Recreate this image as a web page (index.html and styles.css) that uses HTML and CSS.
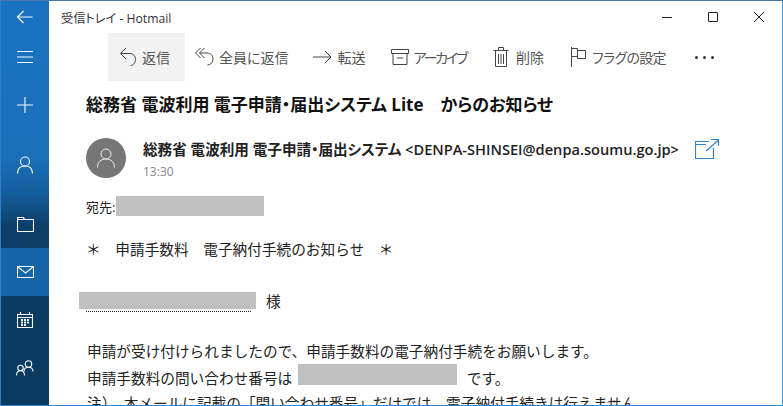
FILE: index.html
```html
<!DOCTYPE html>
<html lang="ja">
<head>
<meta charset="utf-8">
<title>受信トレイ - Hotmail</title>
<link rel="stylesheet" href="styles.css">
</head>
<body>
<div class="window">
  <nav class="rail">
    <div class="rail-item back"><svg width="18" height="14" viewBox="0 0 18 14"><path d="M16.500 7H1.500M7.500 1 1.500 7l6 6"/></svg></div>
    <div class="rail-item"><svg width="16" height="12" viewBox="0 0 16 12"><path d="M0 .5h16M0 6h16M0 11.500h16"/></svg></div>
    <div class="rail-item"><svg width="16" height="16" viewBox="0 0 16 16"><path d="M8 0v16M0 8h16"/></svg></div>
    <div class="rail-gap-a"></div>
    <div class="rail-item"><svg width="16" height="18" viewBox="0 0 16 18"><circle cx="8" cy="5.500" r="4.500"/><path d="M.5 17.500c0-5 3-7.500 7.500-7.500s7.500 2.500 7.500 7.500"/></svg></div>
    <div class="rail-gap-b"></div>
    <div class="rail-item"><svg width="17" height="15" viewBox="0 0 17 15"><path d="M.5.500h6l1 2h9v12H.5zM.5 2.500h7"/></svg></div>
    <div class="rail-item active"><svg width="17" height="12" viewBox="0 0 17 12"><path d="M.5.500h16v11H.5zM.5.500l8 6.500 8-6.500"/></svg></div>
    <div class="rail-item"><svg width="16" height="16" viewBox="0 0 16 16"><path d="M.5 2.500h15v13H.5zM.5 5.500h15M3.500 0v3M12.500 0v3"/><path class="dots" d="M4 8h8M4 10.500h8M4 13h6"/></svg></div>
    <div class="rail-item"><svg width="18" height="16" viewBox="0 0 18 16"><circle cx="12.500" cy="4" r="3.200"/><path d="M8 11.500c0-3 1.800-4.300 4.500-4.300s4.500 1.300 4.500 4.300"/><circle cx="4.500" cy="8" r="2.700"/><path d="M.5 15.500c0-3 1.500-4.800 4-4.800s4 1.800 4 4.800"/></svg></div>
  </nav>
  <main class="pane">
    <header class="titlebar">
      <span class="app-title">受信トレイ - Hotmail</span>
      <div class="controls">
        <svg class="ctl" width="46" height="32" viewBox="0 0 46 32"><path d="M18 16.500h10"/></svg>
        <svg class="ctl" width="46" height="32" viewBox="0 0 46 32"><path d="M18.500 11.500h9v9h-9z"/></svg>
        <svg class="ctl" width="46" height="32" viewBox="0 0 46 32"><path d="M18 11l10 10M28 11 18 21"/></svg>
      </div>
    </header>
    <div class="toolbar">
      <button class="tool first"><svg width="18" height="20" viewBox="0 0 18 20"><path d="M7 1 1.500 6.500 7 12M1.500 6.500H11c3 0 5.500 2.500 5.500 6 0 3.500-2.500 6-5 6"/></svg><span>返信</span></button>
      <button class="tool"><svg width="19" height="20" viewBox="0 0 19 20"><path d="M5.500 1 .5 6l5 5M9.500 1 4.500 6l5 5M4.500 6H12c3.500 0 6 2.500 6 6s-2.500 6-5.500 6"/></svg><span>全員に返信</span></button>
      <button class="tool tool-forward"><svg width="19" height="14" viewBox="0 0 19 14"><path d="M0 7h18M12 1l6 6-6 6"/></svg><span>転送</span></button>
      <button class="tool tool-archive"><svg width="18" height="16" viewBox="0 0 18 16"><path d="M.5.500h17v4H.5zM2 4.500v11h14v-11M6 9h6"/></svg><span class="tight">アーカイブ</span></button>
      <button class="tool tool-delete"><svg width="16" height="20" viewBox="0 0 16 20"><path d="M.5 3.500h15M2.500 3.500v16h11v-16M5.500 3.500V.5h5v3M5.500 7v10M8 7v10M10.500 7v10"/></svg><span>削除</span></button>
      <button class="tool"><svg width="16" height="20" viewBox="0 0 16 20"><path d="M.5 0v20M.5 1.500h6v2h8v8h-8v-2h-6M6.500 3.500v6"/></svg><span class="tight-flag">フラグの設定</span></button>
      <div class="more"><i></i><i></i><i></i></div>
    </div>
    <h1 class="subject">総務省 電波利用 電子申請・届出システム Lite　からのお知らせ</h1>
    <section class="sender">
      <div class="avatar"><svg width="18" height="20" viewBox="0 0 18 20"><circle cx="9" cy="6" r="5"/><path d="M.5 19.500c0-5.500 3.500-8.500 8.500-8.500s8.500 3 8.500 8.500"/></svg></div>
      <div class="sender-text">
        <div class="sender-name">総務省 電波利用 電子申請・届出システム &lt;DENPA-SHINSEI@denpa.soumu.go.jp&gt;</div>
        <div class="time">13:30</div>
      </div>
      <svg class="popout" width="24" height="20" viewBox="0 0 24 20"><path d="M14 2.500H.5v17h18V9M.5 5.500H11M11 12 23 1.500M16 .5h7.500V7"/></svg>
    </section>
    <article class="mail">
      <p class="to">宛先:<span class="redact r-to"></span></p>
      <p class="heading">＊　申請手数料　電子納付手続のお知らせ　＊</p>
      <p class="addressee"><span class="name-wrap"><span class="redact r-name"></span></span><span class="sama">様</span></p>
      <p class="line first-line">申請が受け付けられましたので、申請手数料の電子納付手続をお願いします。</p>
      <p class="line">申請手数料の問い合わせ番号は <span class="redact r-num"></span> です。</p>
      <p class="line">注）　本メールに記載の「問い合わせ番号」だけでは、電子納付手続きは行えません</p>
    </article>
  </main>
</div>
</body>
</html>
```
FILE: styles.css
```css
* { box-sizing: border-box; }
html, body { margin: 0; height: 100%; overflow: hidden; background: #fff; }
body { font-family: "Open Sans", "Noto Sans CJK JP", sans-serif; color: #111; }

.window {
  display: flex;
  width: 783px;
  height: 406px;
  overflow: hidden;
  border-top: 1px solid #4a74ad;
  border-right: 1px solid #3f9be6;
  border-bottom: 1px solid #2a87d6;
}

.rail {
  flex: 0 0 49px;
  display: flex;
  flex-direction: column;
  border-left: 1px solid #2a80cc;
  background: linear-gradient(180deg, #1a72c0 0, #1a6fb8 155px, #15609f 190px, #0d3f69 225px, #0c3c63 300px, #0b3a60 405px);
}
.rail-item {
  flex: 0 0 48px;
  display: flex;
  align-items: center;
  justify-content: center;
}
.rail-item.back { flex-basis: 32px; }
.rail-item.active { background: #1665a9; }
.rail-gap-a { flex: 0 0 12px; }
.rail-gap-b { flex: 0 0 11px; }
.rail svg { fill: none; stroke: #f4f9fd; stroke-width: 1.100; }
.rail svg .dots { stroke-width: 2; stroke-dasharray: 2 1; }

.pane { flex: 1; min-width: 0; display: flex; flex-direction: column; overflow: hidden; }

.titlebar { flex: none; height: 32px; display: flex; align-items: center; justify-content: space-between; }
.app-title { padding-left: 12px; font-size: 12.200px; color: #333; position: relative; top: 1px; font-feature-settings: "palt"; }
.controls { display: flex; }
.ctl { fill: none; stroke: #222; stroke-width: 1; display: block; }

.toolbar { flex: none; height: 48px; display: flex; align-items: center; padding-left: 59px; }
.tool {
  height: 48px;
  display: flex;
  align-items: center;
  gap: 5px;
  padding: 0 15px 0 10px;
  border: 0;
  background: none;
  font: inherit;
  font-size: 14px;
  color: #555;
  font-feature-settings: "palt";
}
.tool.first { background: #f2f2f2; padding-left: 11px; }
.tool svg { fill: none; stroke: #444; stroke-width: 1; flex: none; }
.tool-forward { padding-right: 16px; }
.tool-archive { gap: 4px; padding-right: 17px; }
.tool-delete { gap: 7px; padding-right: 17px; }
.tight { letter-spacing: -2.200px; }
.tight-flag { letter-spacing: -.7px; }
.more { display: flex; gap: 5px; padding-left: 14px; }
.more i { width: 3px; height: 3px; border-radius: 50%; background: #333; }

.subject {
  flex: none;
  margin: 0;
  padding: 13px 0 0 37px;
  height: 49px;
  font-size: 17px;
  line-height: 22px;
  font-weight: 700;
  color: #111;
  white-space: nowrap;
  font-feature-settings: "palt";
}

.sender { position: relative; flex: none; height: 48px; display: flex; padding: 8px 0 0 37px; }
.avatar {
  width: 40px; height: 40px; border-radius: 50%; background: #767676;
  display: flex; align-items: center; justify-content: center; flex: none;
}
.avatar svg { fill: none; stroke: #eee; stroke-width: 1; }
.sender-text { margin-left: 17px; }
.sender-name { font-size: 14.600px; font-weight: 600; line-height: 22px; white-space: nowrap; color: #222; font-feature-settings: "palt"; }
.time { font-size: 12px; line-height: 24px; color: #888; }
.popout { position: absolute; left: 646px; top: 9px; fill: none; stroke: #2e84cc; stroke-width: 1.200; }

.mail { flex: none; font-size: 14.670px; color: #222; white-space: nowrap; padding-top: 18px; }
.mail p { margin: 0; }
.redact { display: inline-block; background: #c0c0c0; vertical-align: middle; }
.to { display: flex; align-items: center; padding-left: 37px; height: 20px; font-size: 13px; }
.r-to { width: 148px; height: 20px; margin-left: 1px; }
.heading { padding-left: 37px; margin-top: 21px !important; height: 24px; line-height: 24px; }
.addressee { display: flex; align-items: flex-start; padding-left: 30px; margin-top: 31px !important; height: 20px; }
.name-wrap { position: relative; display: block; height: 20px; }
.name-wrap::after {
  content: "";
  position: absolute;
  left: 7px; top: 19px; width: 165px;
  border-top: 1px dotted #222;
}
.r-name { display: block; width: 177px; height: 17px; }
.sama { margin-left: 10px; font-size: 14.670px; line-height: 18px; }
.line { padding-left: 38px; line-height: 26px; height: 26px; }
.first-line { margin-top: 26px !important; }
.r-num { width: 159px; height: 21px; margin: 0 6px 0 2px; vertical-align: -1px; }
```
